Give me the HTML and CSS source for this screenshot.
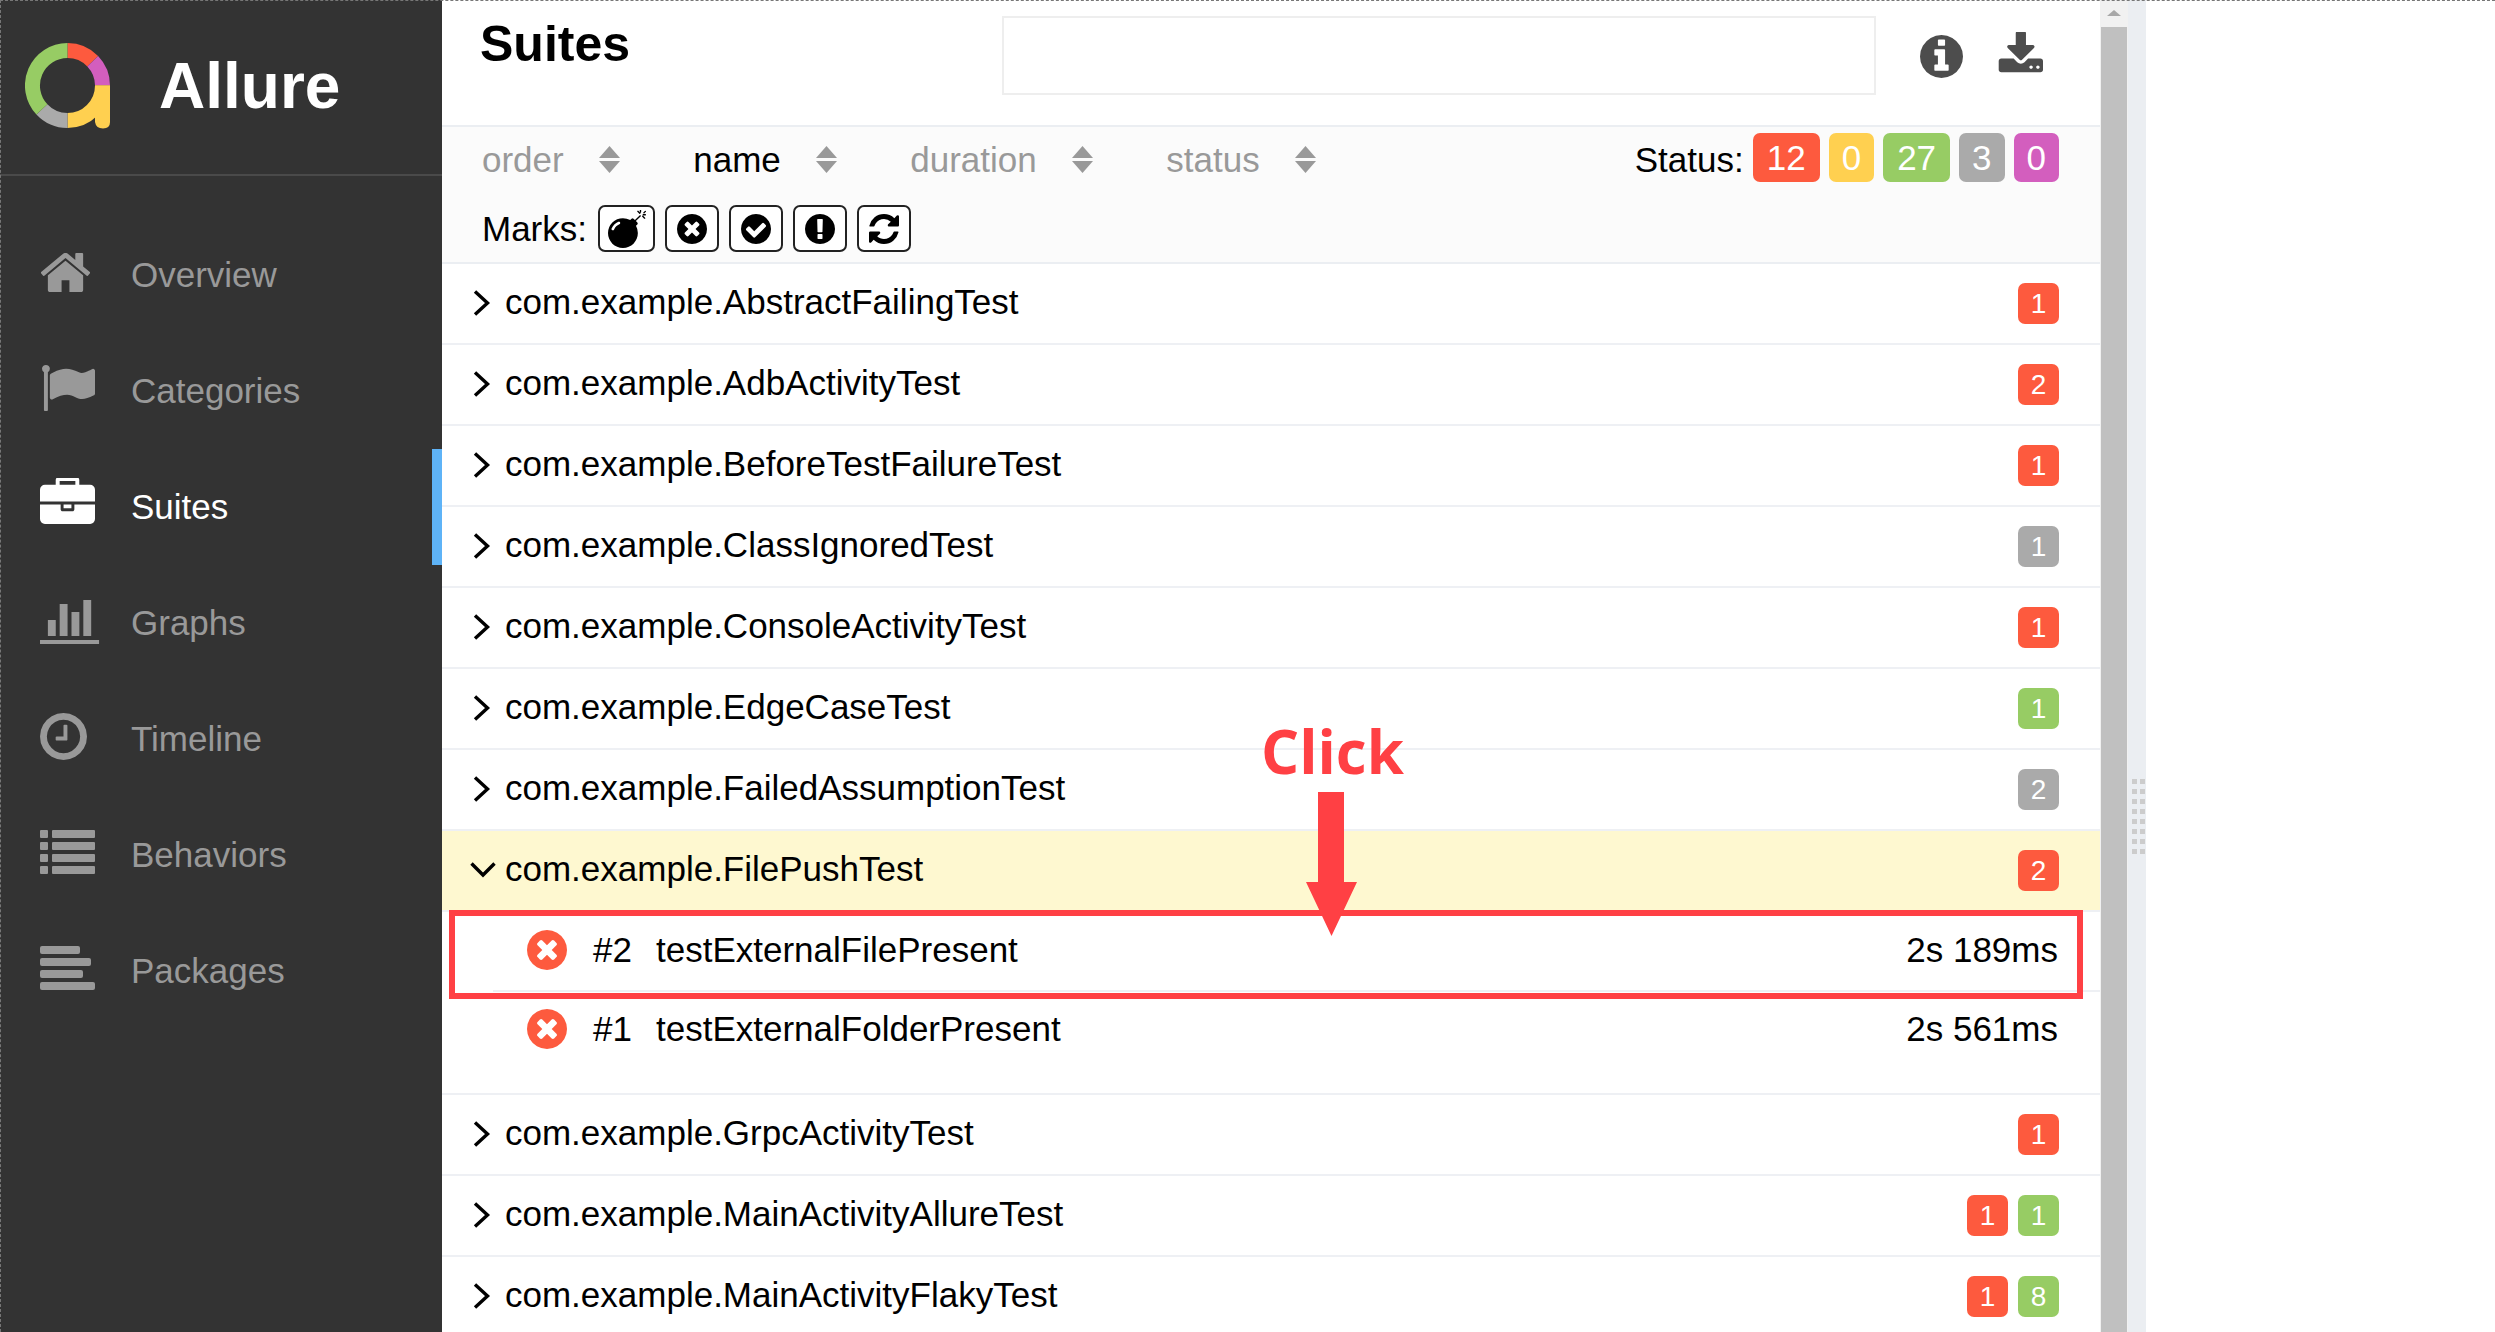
FILE: index.html
```html
<!DOCTYPE html>
<html lang="en">
<head>
  <meta charset="UTF-8" />
  <title>Allure Report</title>
  <link rel="stylesheet" href="styles.css">
</head>
<body>

  <svg class="sprites" xmlns="http://www.w3.org/2000/svg">
    <symbol id="i-home" viewBox="96 256 1600 1280" preserveAspectRatio="none"><path d="M1472 992v480q0 26-19 45t-45 19h-384v-384h-256v384h-384q-26 0-45-19t-19-45v-480q0-1 .5-3t.5-3l575-474 575 474q1 2 1 6zm223-69l-62 74q-8 9-21 11h-3q-13 0-21-7l-692-577-692 577q-12 8-24 7-13-2-21-11l-62-74q-8-10-7-23.5t11-21.5l719-599q32-26 76-26t76 26l244 204v-195q0-14 9-23t23-9h192q14 0 23 9t9 23v408l219 182q10 8 11 21.5t-7 23.5z"/></symbol>
    <symbol id="i-flag" viewBox="64 128 1728 1536" preserveAspectRatio="none"><path d="M320 256q0 72-64 110v1266q0 13-9.5 22.5t-22.5 9.5h-64q-13 0-22.5-9.5t-9.5-22.5v-1266q-64-38-64-110 0-53 37.5-90.5t90.5-37.5 90.5 37.5 37.5 90.5zm1472 64v763q0 25-12.5 38.5t-39.5 27.5q-215 116-369 116-61 0-123.5-22t-108.5-48-115.5-48-142.5-22q-192 0-464 146-17 9-33 9-26 0-45-19t-19-45v-742q0-32 31-55 21-14 79-43 236-120 421-120 107 0 200 29t219 88q38 19 88 19 54 0 117.5-21t110-47 88-47 54.5-21q26 0 45 19t19 45z"/></symbol>
    <symbol id="i-case" viewBox="0 32 1792 1504" preserveAspectRatio="none"><path d="M640 256h512v-128h-512v128zm1152 640v480q0 66-47 113t-113 47h-1472q-66 0-113-47t-47-113v-480h672v160q0 26 19 45t45 19h320q26 0 45-19t19-45v-160h672zm-768 0v128h-256v-128h256zm768-480v384h-1792v-384q0-66 47-113t113-47h352v-160q0-40 28-68t68-28h576q40 0 68 28t28 68v160h352q66 0 113 47t47 113z"/></symbol>
    <symbol id="i-chart" viewBox="0 128 2048 1536" preserveAspectRatio="none"><path d="M512 896v512h-256v-512h256zm384-512v1024h-256v-1024h256zm1024 1152v128h-2048v-1536h128v1408h1920zm-640-896v768h-256v-768h256zm384-384v1152h-256v-1152h256z"/></symbol>
    <symbol id="i-clock" viewBox="128 128 1536 1536"><path d="M1024 544v448q0 14-9 23t-23 9h-320q-14 0-23-9t-9-23v-64q0-14 9-23t23-9h224v-352q0-14 9-23t23-9h64q14 0 23 9t9 23zm416 352q0-148-73-273t-198-198-273-73-273 73-198 198-73 273 73 273 198 198 273 73 273-73 198-198 73-273zm224 0q0 209-103 385.5t-279.5 279.5-385.5 103-385.5-103-279.5-279.5-103-385.5 103-385.5 279.5-279.5 385.5-103 385.5 103 279.5 279.5 103 385.5z"/></symbol>
    <symbol id="i-info" viewBox="128 128 1536 1536"><path d="M1152 1376v-160q0-14-9-23t-23-9h-96v-512q0-14-9-23t-23-9h-320q-14 0-23 9t-9 23v160q0 14 9 23t23 9h96v320h-96q-14 0-23 9t-9 23v160q0 14 9 23t23 9h448q14 0 23-9t9-23zm-128-896v-160q0-14-9-23t-23-9h-192q-14 0-23 9t-9 23v160q0 14 9 23t23 9h192q14 0 23-9t9-23zm640 416q0 209-103 385.5t-279.5 279.5-385.5 103-385.5-103-279.5-279.5-103-385.5 103-385.5 279.5-279.5 385.5-103 385.5 103 279.5 279.5 103 385.5z"/></symbol>
    <symbol id="i-download" viewBox="0 128 1728 1408"><path d="M1344 1344q0-26-19-45t-45-19-45 19-19 45 19 45 45 19 45-19 19-45zm256 0q0-26-19-45t-45-19-45 19-19 45 19 45 45 19 45-19 19-45zm128-224v320q0 40-28 68t-68 28h-1472q-40 0-68-28t-28-68v-320q0-40 28-68t68-28h465l135 136q58 56 136 56t136-56l136-136h464q40 0 68 28t28 68zm-325-569q17 41-14 70l-448 448q-18 19-45 19t-45-19l-448-448q-31-29-14-70 17-39 59-39h256v-448q0-26 19-45t45-19h256q26 0 45 19t19 45v448h256q42 0 59 39z"/></symbol>
    <symbol id="i-bomb" viewBox="0 0 1792 1792"><path d="M571 589q-10-25-34-35t-49 0q-108 44-191 127t-127 191q-10 25 0 49t35 34q13 5 24 5 42 0 60-40 34-84 98.5-148.5t148.5-98.5q25-11 35-35t0-49zm942-356l46 46-244 243 68 68q19 19 19 45.5t-19 45.5l-64 64q89 161 89 343 0 143-55.5 273.5t-150 225-225 150-273.5 55.5-273.5-55.5-225-150-150-225-55.5-273.5 55.5-273.5 150-225 225-150 273.5-55.5q182 0 343 89l64-64q19-19 45.5-19t45.5 19l68 68zm8-56q-10 10-22 10-13 0-23-10l-91-90q-9-10-9-23t9-23q10-9 23-9t23 9l90 91q10 9 10 22.5t-10 22.5zm230 230q-11 9-23 9t-23-9l-90-91q-10-9-10-22.5t10-22.5q9-10 22.5-10t22.5 10l91 90q9 10 9 23t-9 23zm41-183q0 14-9 23t-23 9h-96q-14 0-23-9t-9-23 9-23 23-9h96q14 0 23 9t9 23zm-228-228v96q0 14-9 23t-23 9-23-9-9-23v-96q0-14 9-23t23-9 23 9 9 23zm222 92l-68 68q-9 9-22 9t-23-9q-9-10-9-23t9-22l68-68q10-9 23-9t22 9q10 9 10 22.5t-10 22.5z"/></symbol>
    <symbol id="i-failed" viewBox="128 128 1536 1536"><path d="M1277 1122q0-26-19-45l-181-181 181-181q19-19 19-45 0-27-19-46l-90-90q-19-19-46-19-26 0-45 19l-181 181-181-181q-19-19-45-19-27 0-46 19l-90 90q-19 19-19 46 0 26 19 45l181 181-181 181q-19 19-19 45 0 27 19 46l90 90q19 19 46 19 26 0 45-19l181-181 181 181q19 19 45 19 27 0 46-19l90-90q19-19 19-46zm387-226q0 209-103 385.5t-279.5 279.5-385.5 103-385.5-103-279.5-279.5-103-385.5 103-385.5 279.5-279.5 385.5-103 385.5 103 279.5 279.5 103 385.5z"/></symbol>
    <symbol id="i-passed" viewBox="128 128 1536 1536"><path d="M1412 734q0-28-18-46l-91-90q-19-19-45-19t-45 19l-408 407-226-226q-19-19-45-19t-45 19l-91 90q-18 18-18 46 0 27 18 45l362 362q19 19 45 19 27 0 46-19l543-543q18-18 18-45zm252 162q0 209-103 385.5t-279.5 279.5-385.5 103-385.5-103-279.5-279.5-103-385.5 103-385.5 279.5-279.5 385.5-103 385.5 103 279.5 279.5 103 385.5z"/></symbol>
    <symbol id="i-warn" viewBox="128 128 1536 1536"><path d="M896 128q209 0 385.5 103t279.5 279.5 103 385.5-103 385.5-279.5 279.5-385.5 103-385.5-103-279.5-279.5-103-385.5 103-385.5 279.5-279.5 385.5-103zm128 1247v-190q0-14-9-23.5t-22-9.5h-192q-13 0-23 10t-10 23v190q0 13 10 23t23 10h192q13 0 22-9.5t9-23.5zm-2-344l18-621q0-12-10-18-10-8-24-8h-220q-14 0-24 8-10 6-10 18l17 621q0 10 10 17.5t24 7.5h185q14 0 23.5-7.5t10.5-17.5z"/></symbol>
    <symbol id="i-refresh" viewBox="128 128 1536 1536"><path d="M1639 1056q0 5-1 7-64 268-268 434.5t-478 166.5q-146 0-282.5-55t-243.5-157l-129 129q-19 19-45 19t-45-19-19-45v-448q0-26 19-45t45-19h448q26 0 45 19t19 45-19 45l-137 137q71 66 161 102t187 36q134 0 250-65t186-179q11-17 53-117 8-23 30-23h192q13 0 22.5 9.5t9.5 22.5zm25-800v448q0 26-19 45t-45 19h-448q-26 0-45-19t-19-45 19-45l138-138q-148-137-349-137-134 0-250 65t-186 179q-11 17-53 117-8 23-30 23h-199q-13 0-22.5-9.5t-9.5-22.5v-7q65-268 270-434.5t480-166.5q146 0 284 55.5t245 156.5l130-129q19-19 45-19t45 19 19 45z"/></symbol>
    <symbol id="i-right" viewBox="0 0 30 30"><path d="M7 3.5 L19.5 15 L7 26.5" fill="none" stroke="#000" stroke-width="3.4"/></symbol>
    <symbol id="i-down" viewBox="0 0 30 30"><path d="M3.5 8.5 L15 20 L26.5 8.5" fill="none" stroke="#000" stroke-width="3.4"/></symbol>
    <symbol id="i-sort" viewBox="0 0 21 27"><path class="up" d="M10.5 0 L21 12 H0 Z"/><path class="down" d="M0 15 H21 L10.5 27 Z"/></symbol>
  </svg>

  <aside class="sidebar">
    <div class="brand">
      <svg class="logo" viewBox="0 0 85 86">
        <g fill="none" stroke-width="15">
          <path d="M42.5 7.5 A35 35 0 0 1 67.7 18.2" stroke="#fd5a3e"/>
          <path d="M67.7 18.2 A35 35 0 0 1 77.5 42.5" stroke="#d35ebe"/>
          <path d="M77.5 42.5 A35 35 0 0 1 42.5 77.5" stroke="#ffd050"/>
          <path d="M42.5 77.5 A35 35 0 0 1 16.9 66.4" stroke="#aaa"/>
          <path d="M16.9 66.4 A35 35 0 0 1 42.5 7.5" stroke="#97cc64"/>
        </g>
        <path d="M70 42.5 H85 V79 Q85 85.5 78 85.5 Q71 85.5 70 79 Z" fill="#ffd050"/>
      </svg>
      <span class="brand-name">Allure</span>
    </div>
    <nav class="nav">
      <a class="nav-item"><svg class="nav-icon home"><use href="#i-home"/></svg>Overview</a>
      <a class="nav-item"><svg class="nav-icon flag"><use href="#i-flag"/></svg>Categories</a>
      <a class="nav-item active"><svg class="nav-icon case"><use href="#i-case"/></svg>Suites</a>
      <a class="nav-item"><svg class="nav-icon chart"><use href="#i-chart"/></svg>Graphs</a>
      <a class="nav-item"><svg class="nav-icon clock"><use href="#i-clock"/></svg>Timeline</a>
      <a class="nav-item">
        <svg class="nav-icon lines" viewBox="0 0 55 44">
          <rect width="8" height="8" rx="1"/><rect x="12" width="43" height="8" rx="1"/>
          <rect y="12" width="8" height="8" rx="1"/><rect x="12" y="12" width="43" height="8" rx="1"/>
          <rect y="24" width="8" height="8" rx="1"/><rect x="12" y="24" width="43" height="8" rx="1"/>
          <rect y="36" width="8" height="8" rx="1"/><rect x="12" y="36" width="43" height="8" rx="1"/>
        </svg>Behaviors</a>
      <a class="nav-item">
        <svg class="nav-icon lines" viewBox="0 0 55 44">
          <rect width="40" height="8" rx="2"/><rect y="12" width="51" height="8" rx="2"/>
          <rect y="24" width="43" height="8" rx="2"/><rect y="36" width="55" height="8" rx="2"/>
        </svg>Packages</a>
    </nav>
  </aside>

  <main class="content">
    <header class="top">
      <h1 class="title">Suites</h1>
      <input class="search" type="text" />
      <svg class="top-icon info"><use href="#i-info"/></svg>
      <svg class="top-icon download"><use href="#i-download"/></svg>
    </header>

    <section class="toolbar">
      <div class="toolbar-row">
        <div class="sorts">
          <span class="sort">order <svg class="sort-icon"><use href="#i-sort"/></svg></span>
          <span class="sort current">name <svg class="sort-icon"><use href="#i-sort"/></svg></span>
          <span class="sort">duration <svg class="sort-icon"><use href="#i-sort"/></svg></span>
          <span class="sort">status <svg class="sort-icon"><use href="#i-sort"/></svg></span>
        </div>
        <div class="status">
          <span class="status-label">Status:</span>
          <span class="pill two failed">12</span>
          <span class="pill broken">0</span>
          <span class="pill two passed">27</span>
          <span class="pill skipped">3</span>
          <span class="pill unknown">0</span>
        </div>
      </div>
      <div class="marks">
        <span class="marks-label">Marks:</span>
        <button class="mark wide"><svg class="bomb"><use href="#i-bomb"/></svg></button>
        <button class="mark"><svg><use href="#i-failed"/></svg></button>
        <button class="mark"><svg><use href="#i-passed"/></svg></button>
        <button class="mark"><svg><use href="#i-warn"/></svg></button>
        <button class="mark"><svg><use href="#i-refresh"/></svg></button>
      </div>
    </section>

    <div class="tree">
      <div class="row"><svg class="chev"><use href="#i-right"/></svg><span class="row-name">com.example.AbstractFailingTest</span><span class="counts"><span class="count failed">1</span></span></div>
      <div class="row"><svg class="chev"><use href="#i-right"/></svg><span class="row-name">com.example.AdbActivityTest</span><span class="counts"><span class="count failed">2</span></span></div>
      <div class="row"><svg class="chev"><use href="#i-right"/></svg><span class="row-name">com.example.BeforeTestFailureTest</span><span class="counts"><span class="count failed">1</span></span></div>
      <div class="row"><svg class="chev"><use href="#i-right"/></svg><span class="row-name">com.example.ClassIgnoredTest</span><span class="counts"><span class="count skipped">1</span></span></div>
      <div class="row"><svg class="chev"><use href="#i-right"/></svg><span class="row-name">com.example.ConsoleActivityTest</span><span class="counts"><span class="count failed">1</span></span></div>
      <div class="row"><svg class="chev"><use href="#i-right"/></svg><span class="row-name">com.example.EdgeCaseTest</span><span class="counts"><span class="count passed">1</span></span></div>
      <div class="row"><svg class="chev"><use href="#i-right"/></svg><span class="row-name">com.example.FailedAssumptionTest</span><span class="counts"><span class="count skipped">2</span></span></div>
      <div class="row open"><svg class="chev"><use href="#i-down"/></svg><span class="row-name">com.example.FilePushTest</span><span class="counts"><span class="count failed">2</span></span></div>

      <div class="children">
        <div class="test first">
          <svg class="test-icon"><use href="#i-failed"/></svg>
          <span class="test-order">#2</span>
          <span class="test-name">testExternalFilePresent</span>
          <span class="test-time">2s 189ms</span>
        </div>
        <div class="test">
          <svg class="test-icon"><use href="#i-failed"/></svg>
          <span class="test-order">#1</span>
          <span class="test-name">testExternalFolderPresent</span>
          <span class="test-time">2s 561ms</span>
        </div>
      </div>

      <div class="row"><svg class="chev"><use href="#i-right"/></svg><span class="row-name">com.example.GrpcActivityTest</span><span class="counts"><span class="count failed">1</span></span></div>
      <div class="row"><svg class="chev"><use href="#i-right"/></svg><span class="row-name">com.example.MainActivityAllureTest</span><span class="counts"><span class="count failed">1</span><span class="count passed">1</span></span></div>
      <div class="row"><svg class="chev"><use href="#i-right"/></svg><span class="row-name">com.example.MainActivityFlakyTest</span><span class="counts"><span class="count failed">1</span><span class="count passed">8</span></span></div>
    </div>

    <!-- annotation drawn over the report -->
    <div class="callout-box"></div>
    <div class="callout-label">Click</div>
    <svg class="callout-arrow" viewBox="0 0 51 144"><path d="M12 0 H38 V90 H51 L25.5 144 L0 90 H12 Z"/></svg>
  </main>

  <div class="scrollbar">
    <div class="scroll-up"><span class="scroll-arrow"></span></div>
    <div class="scroll-thumb"></div>
  </div>
  <div class="splitter"><div class="grip"></div></div>

</body>
</html>
```

FILE: styles.css
```css
* {
  box-sizing: border-box;
}

html, body {
  height: 100%;
}

body {
  margin: 0;
  display: flex;
  overflow: hidden;
  background: #fff;
  color: #000;
  font-family: "Liberation Sans", Arial, sans-serif;
  font-size: 35px;
}

/* dashed capture edge */
body::after {
  content: "";
  position: fixed;
  top: 0;
  left: 0;
  right: 0;
  bottom: 0;
  border-top: 1px dashed #777;
  border-left: 1px dashed #777;
  pointer-events: none;
}

.sprites {
  position: absolute;
  width: 0;
  height: 0;
}

/* sidebar */
.sidebar {
  flex: 0 0 442px;
  background: #333;
}

.brand {
  display: flex;
  align-items: center;
  height: 176px;
  padding: 0 0 2px 25px;
  border-bottom: 2px solid #4a4a4a;
}

.logo {
  width: 85px;
  height: 86px;
  margin-right: 49px;
}

.brand-name {
  color: #fff;
  font-size: 64px;
  font-weight: bold;
}

.nav {
  padding-top: 41px;
}

.nav-item {
  display: flex;
  align-items: center;
  height: 116px;
  padding-left: 40px;
  color: #999;
  font-size: 35px;
  fill: #999;
}

.nav-item.active {
  color: #fff;
  fill: #fff;
  border-right: 10px solid #5eb3f7;
}

.nav-icon {
  display: block;
  width: 55px;
  height: 44px;
  margin-right: 36px;
  margin-bottom: 6px;
}

.nav-icon.home {
  width: 49px;
  height: 39px;
  margin-left: 1px;
  margin-right: 41px;
}

.nav-icon.flag {
  width: 53px;
  height: 46px;
  margin-left: 2px;
  margin-right: 36px;
}

.nav-icon.case {
  height: 46px;
  margin-bottom: 12px;
}

.nav-icon.chart {
  width: 63px;
  height: 48px;
  margin-right: 28px;
}

.nav-icon.clock {
  width: 47px;
  height: 47px;
  margin-right: 44px;
}

/* main column */
.content {
  position: relative;
  flex: 0 0 1658px;
  overflow: hidden;
}

.top {
  display: flex;
  align-items: flex-start;
  height: 127px;
  padding-left: 38px;
  border-bottom: 2px solid #ebeef2;
}

.title {
  width: 522px;
  margin: 16px 0 0;
  font-size: 50px;
  line-height: 56px;
}

.search {
  width: 874px;
  height: 79px;
  margin-top: 16px;
  border: 2px solid #eee;
  background: #fff;
}

.top-icon {
  fill: #4d4d4d;
}

.info {
  width: 43px;
  height: 43px;
  margin: 35px 0 0 44px;
}

.download {
  width: 46px;
  height: 43px;
  margin: 32px 0 0 34px;
}

.toolbar {
  height: 137px;
  padding: 6px 41px 0 40px;
  background: #fbfbfb;
  border-bottom: 2px solid #ebeef2;
}

.toolbar-row {
  display: flex;
  align-items: center;
  justify-content: space-between;
  height: 49px;
}

.sorts {
  display: flex;
  gap: 73.5px;
  padding-top: 4px;
}

.sort {
  display: flex;
  align-items: center;
  gap: 35px;
  color: #999;
  fill: #999;
}

.sort.current {
  color: #000;
}

.sort-icon {
  width: 21px;
  height: 27px;
}

.up {
  fill: #999;
}

.sort.current .up {
  fill: #000;
}

.status {
  display: flex;
  align-items: center;
  gap: 9px;
}

.status-label {
  padding-top: 4px;
}

.pill {
  height: 49px;
  padding: 0 13px;
  border-radius: 7px;
  color: #fff;
  line-height: 49px;
}

.pill.two {
  padding: 0 14px;
}

.failed { background: #fd5a3e; }
.broken { background: #ffd050; }
.passed { background: #97cc64; }
.skipped { background: #aaa; }
.unknown { background: #d35ebe; }

.marks {
  display: flex;
  align-items: center;
  gap: 10px;
  margin-top: 23px;
}

.marks-label {
  margin-right: 1px;
}

.mark {
  display: flex;
  align-items: center;
  justify-content: center;
  width: 54px;
  height: 47px;
  padding: 0;
  border: 2px solid #222;
  border-radius: 7px;
  background: #fff;
}

.mark.wide {
  width: 57px;
}

.mark svg {
  width: 30px;
  height: 30px;
}

.mark svg.bomb {
  width: 38px;
  height: 38px;
}

/* tree */
.row {
  display: flex;
  align-items: center;
  height: 81px;
  padding: 0 41px 0 26px;
  border-bottom: 2px solid #eef0f4;
}

.row.open {
  background: #fef8d0;
}

.chev {
  width: 30px;
  height: 30px;
  margin-right: 7px;
  margin-bottom: 2px;
  flex: none;
}

.row-name {
  padding-bottom: 4px;
}

.counts {
  display: flex;
  gap: 10px;
  margin-left: auto;
}

.count {
  width: 41px;
  height: 41px;
  border-radius: 7px;
  color: #fff;
  font-size: 28px;
  line-height: 41px;
  text-align: center;
}

.children {
  padding-bottom: 23px;
  border-bottom: 2px solid #eef0f4;
}

.test {
  display: flex;
  align-items: center;
  height: 78px;
  padding: 0 42px 0 85px;
}

.test.first {
  height: 80px;
  position: relative;
}

.test.first::after {
  content: "";
  position: absolute;
  left: 51px;
  right: 0;
  bottom: 0;
  border-bottom: 2px solid #eef0f4;
}

.test-icon {
  width: 40px;
  height: 40px;
  margin-right: 26px;
  margin-bottom: 4px;
  fill: #fd5a3e;
}

.test-order {
  width: 63px;
  padding-bottom: 4px;
}

.test-name,
.test-time {
  padding-bottom: 4px;
}

.test-time {
  margin-left: auto;
}

/* annotation */
.callout-box {
  position: absolute;
  left: 7px;
  top: 910px;
  width: 1634px;
  height: 89px;
  border: 6px solid #ff4044;
}

.callout-label {
  position: absolute;
  left: 819px;
  top: 708px;
  color: #ff4044;
  font-family: "Open Sans", sans-serif;
  font-size: 60px;
  font-weight: bold;
  line-height: 86px;
}

.callout-arrow {
  position: absolute;
  left: 864px;
  top: 792px;
  width: 51px;
  height: 144px;
  fill: #ff4044;
}

/* scrollbar + splitter */
.scrollbar {
  flex: 0 0 28px;
  display: flex;
  flex-direction: column;
  background: #f1f1f1;
}

.scroll-up {
  display: flex;
  justify-content: center;
  height: 27px;
  padding-top: 10px;
}

.scroll-arrow {
  width: 0;
  height: 0;
  border-left: 7px solid transparent;
  border-right: 7px solid transparent;
  border-bottom: 6px solid #a8a8a8;
}

.scroll-thumb {
  flex: 1;
  margin: 0 1px;
  background: #c0c0c0;
}

.splitter {
  flex: 0 0 18px;
  padding: 779px 0 0 4px;
  background: #ebeef2;
}

.grip {
  width: 13px;
  height: 75px;
  background:
    linear-gradient(#ebeef2 5px, transparent 5px) 0 5px / 100% 10px,
    linear-gradient(90deg, #ccc 5px, transparent 5px) 0 0 / 8px 100%;
}
```
